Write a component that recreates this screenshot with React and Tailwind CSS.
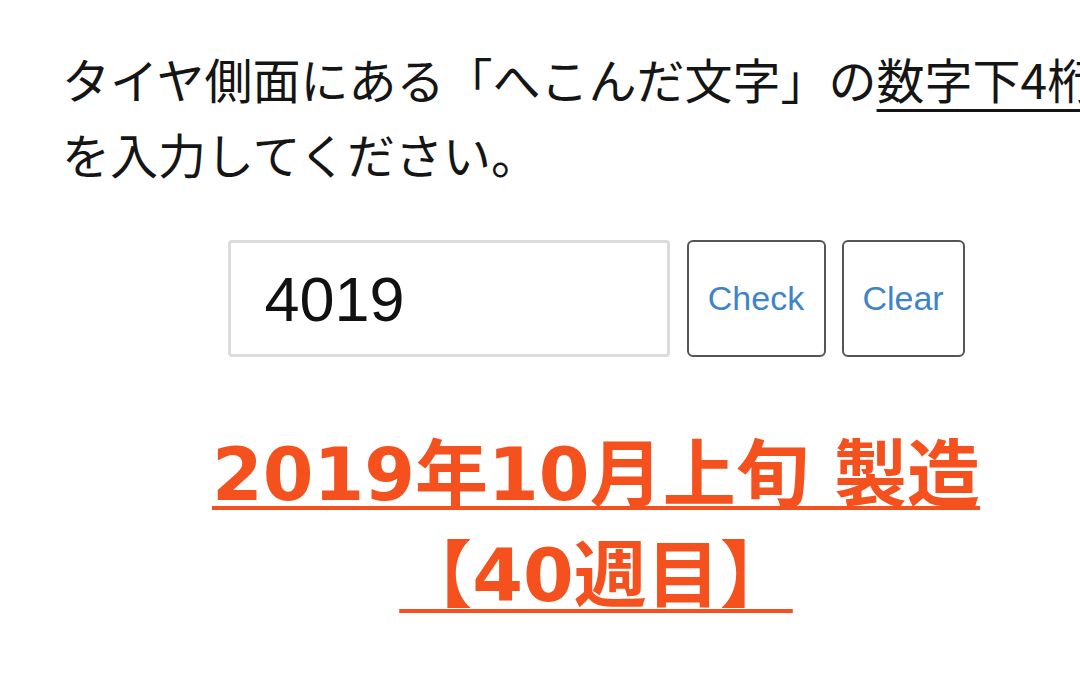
export default function App() {
  return (
    <div className="w-[1080px] h-[687px] overflow-hidden bg-white">
      <div className="ml-[62px] w-[1068px] pt-[41px]">
        <p className="font-['Noto_Sans_CJK_JP',sans-serif] text-[48px] leading-[75px] text-[#151515]">
          <span className="block whitespace-nowrap">
            タイヤ側面にある「へこんだ文字」の
            <span className="underline decoration-[3px] underline-offset-[10px]">数字下4桁</span>
          </span>
          <span className="block whitespace-nowrap">を入力してください。</span>
        </p>

        <div className="mt-[49px] flex justify-center gap-[17px]">
          <input
            readOnly
            defaultValue="4019"
            className="w-[442px] h-[117px] border-[3px] border-[#dcdcdc] rounded-[4px] pl-[34px] text-[63px] text-[#111] font-['Liberation_Sans',sans-serif] outline-none"
          />
          <div className="flex gap-[16px]">
            <button className="w-[139px] h-[117px] border-2 border-[#555] rounded-[6px] bg-white text-[34px] text-[#3f84c8] font-['Liberation_Sans',sans-serif]">
              Check
            </button>
            <button className="w-[123px] h-[117px] border-2 border-[#555] rounded-[6px] bg-white text-[34px] text-[#3f84c8] font-['Liberation_Sans',sans-serif]">
              Clear
            </button>
          </div>
        </div>

        <p className="mt-[67px] text-center font-['DejaVu_Sans','Noto_Sans_CJK_JP',sans-serif] font-bold text-[73px] leading-[101px] text-[#f4511e]">
          <span className="underline decoration-[4px] underline-offset-[6px]">2019年10月上旬 製造</span>
          <br />
          <span className="underline decoration-[4px] underline-offset-[8px]">【40週目】</span>
        </p>
      </div>
    </div>
  );
}
